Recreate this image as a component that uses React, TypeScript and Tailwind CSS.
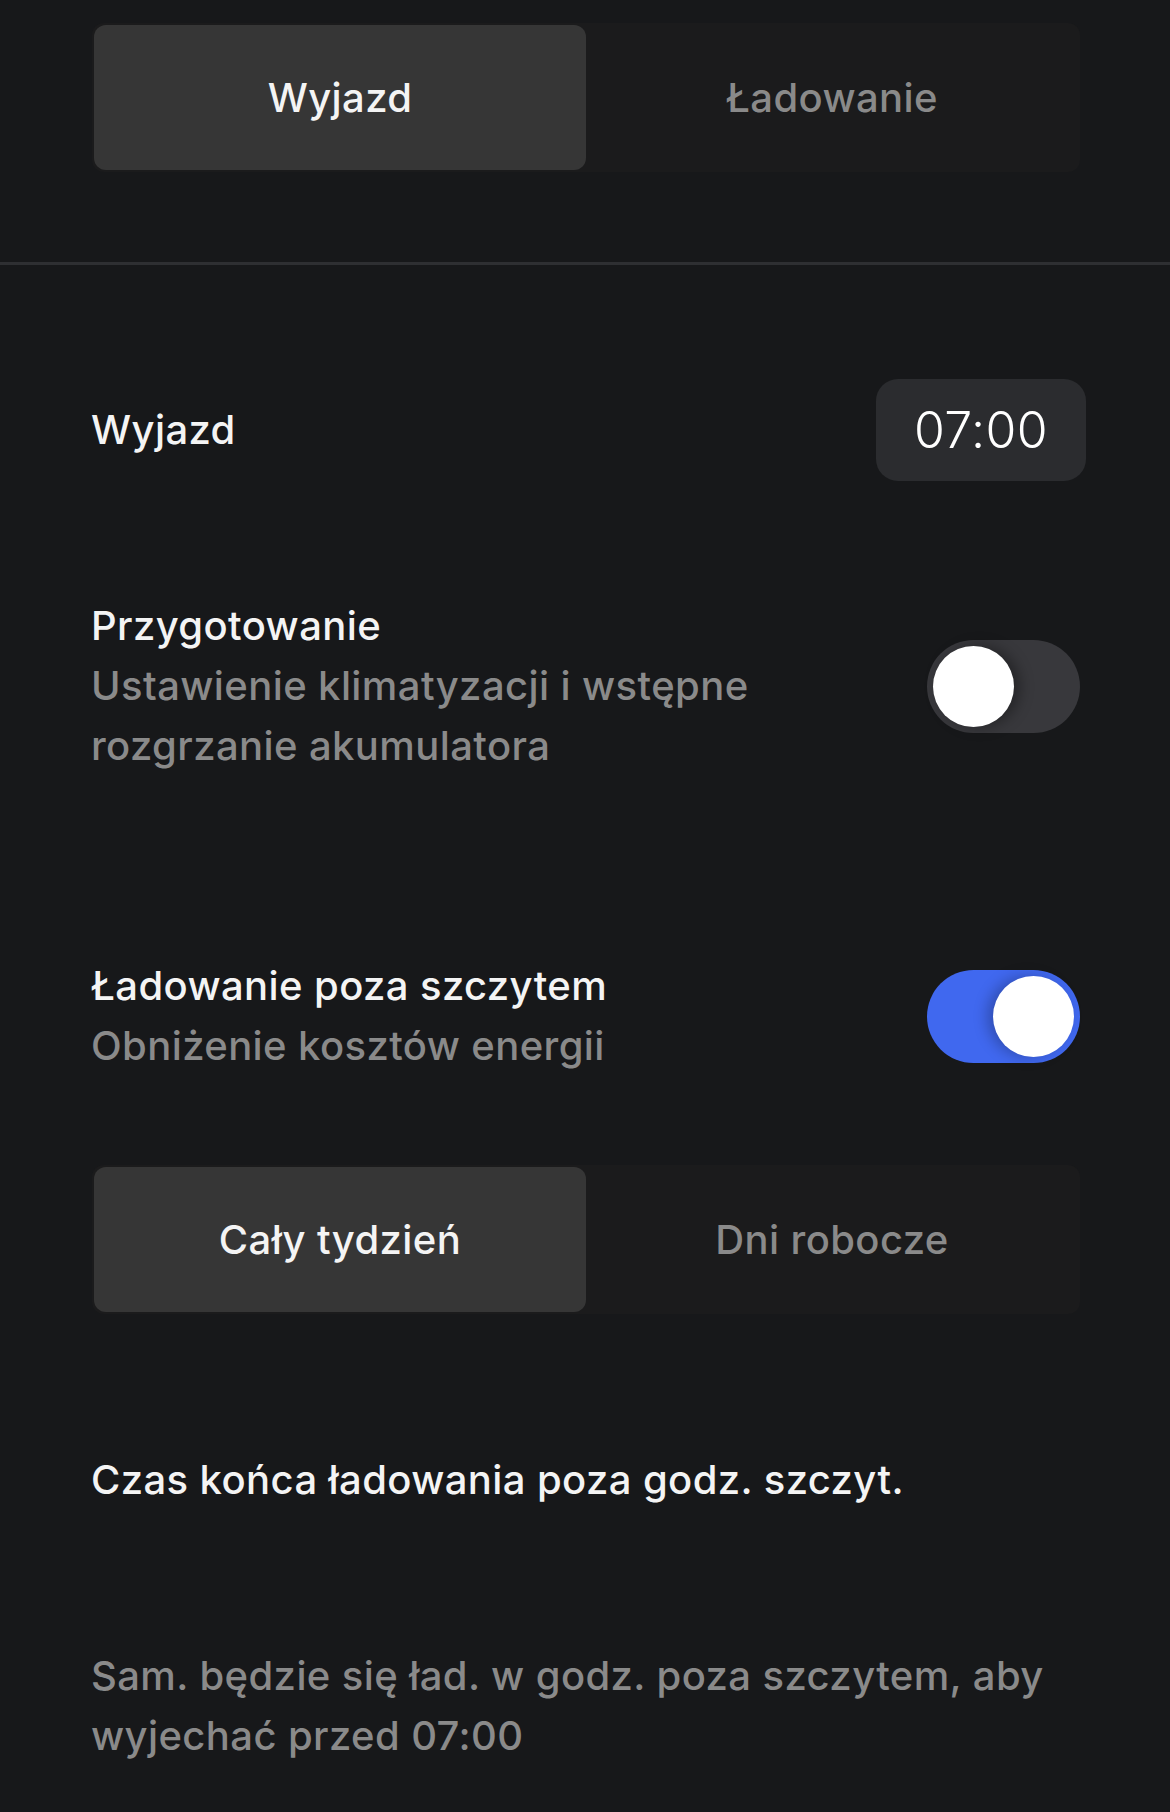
import React from "react";

function Segmented({ left, right }: { left: string; right: string }) {
  return (
    <div className="grid grid-cols-2 h-[149px] rounded-[12px] bg-[#1b1b1c] p-[2px]">
      <div className="flex items-center justify-center rounded-[12px] bg-[#363636] text-[40px] font-medium tracking-[0.4px] text-[#f4f4f4]">
        {left}
      </div>
      <div className="flex items-center justify-center text-[40px] font-medium tracking-[0.4px] text-[#8a8a8a]">
        {right}
      </div>
    </div>
  );
}

function Toggle({ on }: { on: boolean }) {
  return (
    <div
      className={
        on
          ? "relative h-[93px] w-[153px] shrink-0 rounded-full bg-[#4068ef]"
          : "relative h-[93px] w-[153px] shrink-0 rounded-full bg-[#38383c]"
      }
    >
      <div
        className={
          on
            ? "absolute right-[6px] top-[6px] h-[81px] w-[81px] rounded-full bg-white shadow-[-6px_0_14px_rgba(0,0,0,0.25)]"
            : "absolute left-[6px] top-[6px] h-[81px] w-[81px] rounded-full bg-white shadow-[6px_0_14px_rgba(0,0,0,0.35)]"
        }
      />
    </div>
  );
}

export default function App() {
  return (
    <div
      className="min-h-[1812px] w-[1170px] bg-[#17181a] text-[#f4f4f4]"
      style={{ fontFamily: "Inter, 'Noto Sans', sans-serif" }}
    >
      <div className="pl-[92px] pr-[90px] pt-[23px]">
        <Segmented left="Wyjazd" right="Ładowanie" />
      </div>
      <div className="mt-[90px] h-[3px] bg-[#2e2f32]" />
      <div className="pl-[91px] pr-[90px] tracking-[0.4px]">
        <div className="mt-[114px] flex items-center justify-between">
          <div className="text-[40px] font-medium leading-[60px]">Wyjazd</div>
          <div className="-mr-[6px] flex h-[102px] w-[210px] items-center justify-center rounded-[22px] bg-[#2b2c2f] text-[50px] font-light text-white">
            07:00
          </div>
        </div>

        <div className="mt-[115px] flex items-center justify-between">
          <div className="text-[40px] font-medium leading-[60px]">
            <div>Przygotowanie</div>
            <div className="text-[#8a8a8a]">
              Ustawienie klimatyzacji i wstępne
              <br />
              rozgrzanie akumulatora
            </div>
          </div>
          <Toggle on={false} />
        </div>

        <div className="mt-[180px] flex items-center justify-between">
          <div className="text-[40px] font-medium leading-[60px]">
            <div>Ładowanie poza szczytem</div>
            <div className="text-[#8a8a8a]">Obniżenie kosztów energii</div>
          </div>
          <Toggle on={true} />
        </div>

        <div className="mt-[89px] pl-[1px]">
          <Segmented left="Cały tydzień" right="Dni robocze" />
        </div>

        <div className="mt-[136px] text-[40px] font-medium leading-[60px]">
          Czas końca ładowania poza godz. szczyt.
        </div>

        <div className="mt-[136px] text-[40px] font-medium leading-[60px] text-[#8a8a8a]">
          Sam. będzie się ład. w godz. poza szczytem, aby
          <br />
          wyjechać przed 07:00
        </div>
      </div>
    </div>
  );
}
